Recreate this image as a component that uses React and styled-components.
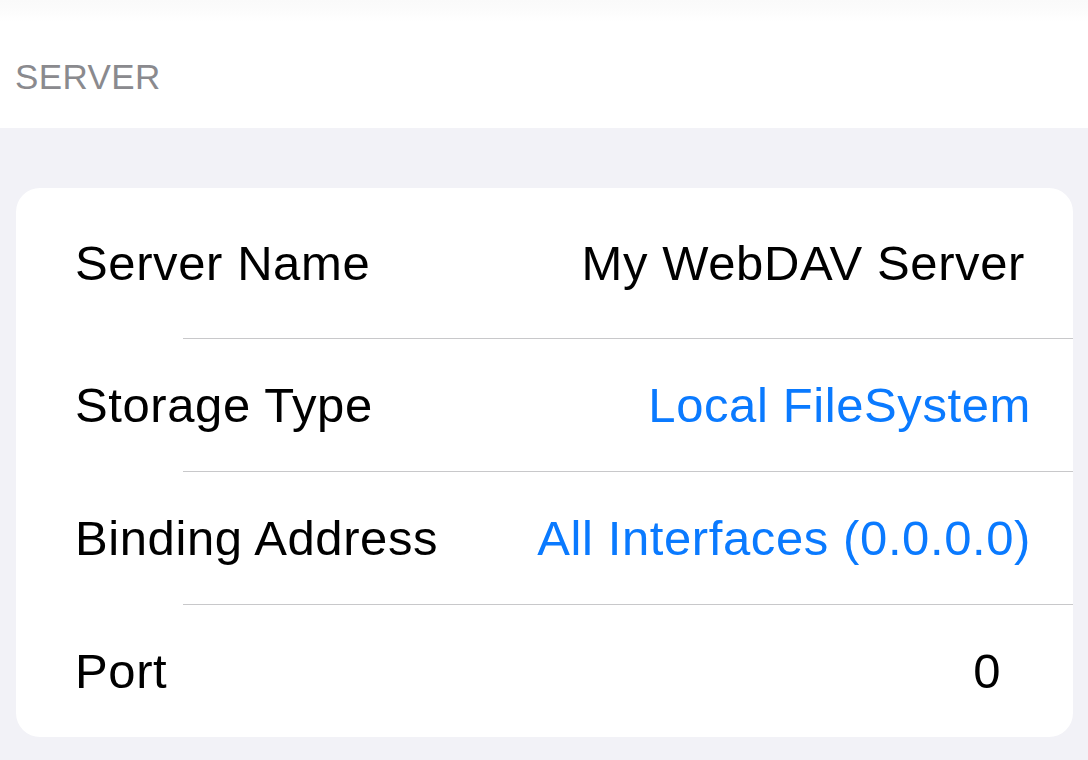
import styled, { createGlobalStyle } from 'styled-components';

const GlobalStyle = createGlobalStyle`
    html, body {
        margin: 0;
        padding: 0;
        background: #F2F2F7;
    }
    body {
        font-family: "Liberation Sans", Arial, sans-serif;
        -webkit-font-smoothing: antialiased;
    }
`

const Page = styled.div`
    width: 1088px;
    height: 760px;
    display: flex;
    flex-direction: column;
    background: #F2F2F7;
    overflow: hidden;
`

const Header = styled.header`
    height: 128px;
    box-sizing: border-box;
    background: linear-gradient(to bottom, #FAFAFA 0px, #FCFCFC 12px, #FFFFFF 22px);
    display: flex;
    align-items: flex-end;
    padding: 0 0 34px 15px;
`

const SectionTitle = styled.h2`
    margin: 0;
    font-size: 35px;
    font-weight: normal;
    line-height: 1;
    color: #8A8A8E;
    letter-spacing: 0.4px;
`

const Content = styled.main`
    flex: 1;
    padding: 60px 15px 0 16px;
`

const Card = styled.section`
    background: #FFFFFF;
    border-radius: 24px;
    overflow: hidden;
`

const Row = styled.div`
    position: relative;
    height: ${props => props.first ? "150px" : "132px"};
    display: flex;
    align-items: center;
    justify-content: space-between;
    padding: 0 ${props => props.padRight}px 0 59px;
    ${props => props.first ? "" : "border-top: 1px solid transparent;"}

    ${props => props.first ? "" : `
    &::before {
        content: "";
        position: absolute;
        top: -1px;
        left: 167px;
        right: 0;
        height: 1px;
        background: #C8C8CA;
    }`}
`

const Label = styled.span`
    font-size: 49px;
    letter-spacing: 0.6px;
    color: #000000;
`

const Value = styled.span`
    font-size: 49px;
    letter-spacing: 0.6px;
    color: ${props => props.link ? "#0A7AFF" : "#000000"};
`

const rows = [
    { label: 'Server Name', value: 'My WebDAV Server', pad: 48 },
    { label: 'Storage Type', value: 'Local FileSystem', link: true, pad: 42 },
    { label: 'Binding Address', value: 'All Interfaces (0.0.0.0)', link: true, pad: 42 },
    { label: 'Port', value: '0', pad: 72 },
];

function App() {
    return (
        <>
            <GlobalStyle />
            <Page>
                <Header>
                    <SectionTitle>SERVER</SectionTitle>
                </Header>
                <Content>
                    <Card>
                        {rows.map((row, i) => (
                            <Row key={row.label} first={i === 0} padRight={row.pad}>
                                <Label>{row.label}</Label>
                                <Value link={row.link}>{row.value}</Value>
                            </Row>
                        ))}
                    </Card>
                </Content>
            </Page>
        </>
    );
}

export default App;
